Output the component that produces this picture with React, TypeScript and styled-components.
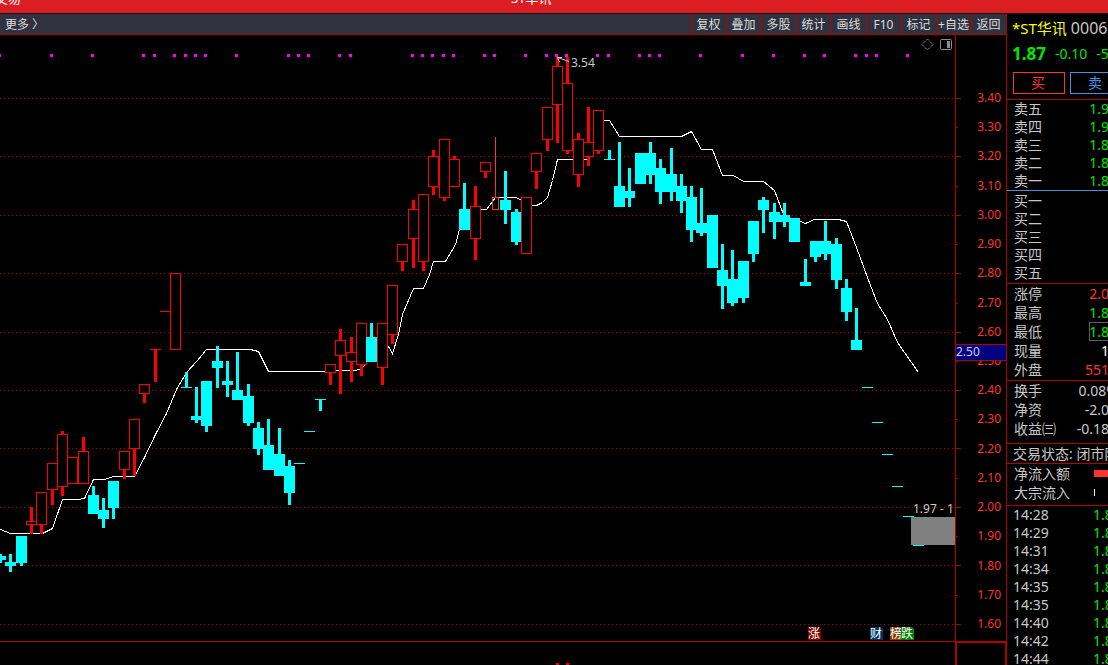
import React from "react";
import styled, { createGlobalStyle } from "styled-components";

const color = {
  line: "#b00000",
  candleUp: "#ff0000",
  candleDown: "#00ffff",
  up: "#ff3232",
  down: "#00e600",
  text: "#c8c8c8",
  blue: "#4090e6",
};

const GlobalStyle = createGlobalStyle`
  *, *::before, *::after { box-sizing: border-box; }
  body {
    margin: 0;
    background: #000;
    color: ${color.text};
    font-family: "Noto Sans", "Noto Sans CJK SC", sans-serif;
    font-size: 12px;
    overflow: hidden;
  }
`;

const Page = styled.div`
  display: flex;
  flex-direction: column;
  height: 100vh;
  overflow: hidden;
`;

const Header = styled.header`
  display: flex;
  flex: none;
  gap: 490px;
  height: 14px;
  padding-bottom: 7px;
  align-items: flex-end;
  background: #dc1e23;
  border-bottom: 1px solid #14141c;
  overflow: hidden;
  color: #fff;
  white-space: nowrap;
`;

const HeaderText = styled.span`
  line-height: 16px;
  font-size: 13px;

  &:first-child {
    margin-left: -5px;
  }
`;

const Body = styled.div`
  display: flex;
  flex: 1;
  min-height: 0;
`;

const Main = styled.main`
  display: flex;
  flex: 1;
  flex-direction: column;
  min-width: 0;
`;

const Toolbar = styled.nav`
  display: flex;
  flex: none;
  height: 21px;
  background: #30323f;
  border-bottom: 1px solid ${color.line};
`;

const MoreButton = styled.button`
  margin-right: auto;
  padding: 2px 5px 0;
  border: 0;
  background: none;
  color: #dcdcdc;
  font: inherit;
  line-height: 18px;
`;

const ToolButton = styled.button`
  width: 35px;
  padding: 2px 1px 0 0;
  border: 0;
  border-left: 1px solid ${color.line};
  background: none;
  color: #dcdcdc;
  font: inherit;
  line-height: 18px;
  white-space: nowrap;
  overflow: hidden;
`;

const ChartRow = styled.section`
  display: flex;
  flex: none;
`;

const Plot = styled.svg`
  display: block;
  flex: 1;
  min-width: 0;
  height: auto;
  font-size: 12px;
`;

const Axis = styled.div`
  position: relative;
  display: flex;
  flex: none;
  width: 51px;
  border-left: 1px solid ${color.line};
`;

const Ticks = styled.svg`
  width: 5px;
  height: 100%;
  flex: none;
`;

const AxisLabels = styled.div`
  display: flex;
  flex: 1;
  flex-direction: column;
  justify-content: space-between;
  padding: 55px 5px 9px 0;
  color: ${color.up};
  line-height: 16px;
  text-align: right;
`;

const AxisCursor = styled.output`
  position: absolute;
  top: 51%;
  left: 0;
  width: 100%;
  height: 17px;
  border: solid ${color.line};
  border-width: 1px 0;
  background: #000080;
  color: #d0d0e6;
  line-height: 14px;
`;

const LowerPane = styled.section`
  display: flex;
  flex: 1;
  min-height: 24px;
`;

const LowerPlot = styled.div`
  display: flex;
  flex: 1;
  border-top: 1px solid ${color.line};
`;

const LowerAxis = styled.div`
  width: 51px;
  border: solid ${color.line};
  border-width: 2px 1px 0 2px;
`;

const Sidebar = styled.aside`
  flex: none;
  width: 102px;
  border-left: 1px solid ${color.line};
  font-size: 14px;
  white-space: nowrap;
  overflow: hidden;
`;

const Title = styled.h1`
  display: flex;
  gap: 4px;
  height: 30px;
  margin: 0;
  padding-left: 5px;
  color: #ffff00;
  font-size: 15px;
  font-weight: 400;
  line-height: 28px;
`;

const Code = styled.span`
  color: ${color.text};
  font-size: 16px;
`;

const Quote = styled.div`
  display: flex;
  gap: 9px;
  padding-left: 5px;
  color: ${color.down};
  line-height: 20px;
`;

const LastPrice = styled.strong`
  font-size: 17px;
`;

const Trade = styled.div`
  display: flex;
  gap: 5px;
  padding: 8px 0 5px 6px;
`;

const TradeButton = styled.button<{ $tone: string }>`
  flex: none;
  width: 52px;
  height: 22px;
  padding: 0 2px 0 0;
  border: 1px solid ${(p) => p.$tone};
  background: none;
  color: ${(p) => p.$tone};
  font: inherit;
  line-height: 20px;
`;

const Group = styled.dl<{ $row: number; $top?: number; $bottom?: number; $tone?: string }>`
  margin: 0;
  padding: ${(p) => p.$top ?? 0}px 0 ${(p) => p.$bottom ?? 0}px 7px;
  border-top: 1px solid ${(p) => p.$tone ?? color.line};
  line-height: ${(p) => p.$row}px;
`;

const Row = styled.div`
  display: flex;
  align-items: center;
`;

const Label = styled.dt`
  flex: none;
  margin-right: auto;
`;

const Value = styled.dd<{ $tone?: string; $bleed?: number; $boxed?: boolean }>`
  flex: none;
  margin: 0 -${(p) => p.$bleed ?? 1}px 0 0;
  color: ${(p) => p.$tone ?? color.text};
  ${(p) => p.$boxed && "outline: 1px solid #5a6070;"}
  outline-offset: -1px;
`;

const Status = styled.p`
  margin: 0;
  padding-left: 6px;
  border-top: 1px solid ${color.line};
  line-height: 19px;
`;

const FlowBar = styled.dd<{ $tone: string; $fill?: boolean }>`
  flex: none;
  width: 14px;
  height: 7px;
  margin: 0;
  border-left: ${(p) => (p.$fill ? 14 : 1)}px solid ${(p) => p.$tone};
`;

const Deals = styled.table`
  width: 100%;
  border-collapse: separate;
  border-spacing: 0;
  border-top: 1px solid ${color.line};
  line-height: 18px;
`;

const DealTime = styled.td`
  width: 86px;
  padding: 0 0 0 6px;
`;

const DealPrice = styled.td`
  max-width: 15px;
  padding: 0;
  color: ${color.down};
`;

type Kind = "up" | "down";
/* kind, left edge, high, body top, body bottom, low */
type Candle = [Kind, number, number, number, number, number];

const candles: Candle[] = [
  ["down", -5, 554, 556, 560, 563], ["down", 5, 554, 562, 566, 572], ["down", 16, 536, 536, 563, 566],
  ["up", 26, 507, 521, 525, 534], ["up", 36, 492, 492, 525, 534], ["up", 47, 463, 463, 490, 505],
  ["up", 57, 431, 434, 487, 496], ["up", 67, 457, 457, 484, 484], ["up", 78, 437, 451, 484, 484],
  ["down", 88, 486, 495, 514, 514], ["down", 98, 498, 510, 519, 528], ["down", 108, 481, 481, 508, 519],
  ["up", 119, 451, 451, 470, 479], ["up", 129, 419, 419, 449, 476], ["up", 139, 384, 384, 394, 403],
  ["up", 150, 349, 349, 350, 382], ["up", 160, 311, 311, 312, 312], ["up", 170, 273, 273, 350, 350],
  ["down", 181, 372, 387, 388, 388], ["down", 191, 387, 416, 420, 423], ["down", 201, 381, 381, 426, 432],
  ["down", 212, 346, 361, 368, 388], ["down", 222, 361, 381, 385, 397], ["down", 232, 352, 390, 400, 400],
  ["down", 243, 384, 396, 423, 426], ["down", 253, 422, 428, 449, 455], ["down", 263, 419, 445, 470, 470],
  ["down", 274, 428, 454, 476, 476], ["down", 284, 460, 466, 493, 505], ["down", 294, 463, 463, 464, 464],
  ["down", 304, 431, 431, 432, 432], ["down", 315, 399, 399, 400, 411], ["up", 325, 364, 364, 373, 385],
  ["up", 335, 329, 340, 356, 394], ["up", 346, 337, 352, 362, 382], ["up", 356, 323, 323, 365, 376],
  ["down", 366, 323, 337, 362, 362], ["up", 377, 323, 323, 368, 385], ["up", 387, 285, 285, 335, 344],
  ["up", 397, 244, 244, 262, 271], ["up", 408, 200, 209, 239, 268], ["up", 418, 194, 194, 262, 271],
  ["up", 428, 150, 156, 187, 195], ["up", 439, 139, 139, 198, 201], ["up", 449, 156, 159, 187, 187],
  ["down", 459, 183, 209, 230, 230], ["up", 470, 186, 206, 239, 260], ["up", 480, 162, 162, 172, 178],
  ["down", 500, 171, 200, 210, 224], ["down", 511, 209, 212, 242, 245], ["up", 521, 197, 197, 254, 254],
  ["up", 531, 153, 153, 172, 189], ["up", 542, 107, 107, 140, 151], ["up", 552, 57, 66, 105, 143],
  ["up", 562, 57, 83, 151, 154], ["up", 573, 133, 139, 175, 187], ["up", 583, 107, 142, 157, 166],
  ["up", 593, 110, 110, 151, 154], ["down", 604, 150, 159, 160, 160], ["down", 614, 142, 186, 207, 207],
  ["down", 624, 168, 191, 198, 207], ["down", 635, 153, 153, 184, 184], ["down", 645, 142, 153, 175, 184],
  ["down", 655, 159, 168, 192, 204], ["down", 666, 148, 174, 192, 201], ["down", 676, 174, 186, 201, 213],
  ["down", 686, 186, 197, 230, 242], ["down", 696, 188, 223, 233, 236], ["down", 707, 215, 215, 268, 268],
  ["down", 717, 244, 270, 286, 309], ["down", 727, 250, 279, 303, 306], ["down", 738, 261, 261, 298, 303],
  ["down", 748, 221, 221, 254, 262], ["down", 758, 197, 200, 210, 233], ["down", 769, 203, 212, 222, 239],
  ["down", 779, 203, 215, 222, 227], ["down", 789, 218, 218, 242, 242], ["down", 800, 259, 282, 286, 286],
  ["down", 810, 241, 241, 257, 262], ["down", 820, 221, 241, 254, 260], ["down", 831, 238, 244, 280, 289],
  ["down", 841, 279, 288, 312, 321], ["down", 851, 308, 340, 350, 350], ["down", 862, 387, 387, 388, 388],
  ["down", 872, 422, 422, 423, 423], ["down", 882, 454, 454, 455, 455], ["down", 892, 486, 486, 487, 487],
  ["down", 903, 516, 516, 517, 517], ["down", 913, 545, 545, 546, 546],
];

const average =
  "0,529 10,533 42,533 52,528 62,499 77,499 84,498 93,479 104,479 113,476 134,476 144,457 155,434 166,413 " +
  "176,389 186,372 197,360 206,349 250,349 258,351 268,371 335,371 336,370 354,370 360,369 364,365 372,350 " +
  "382,340 388,346 392,353 398,334 402,314 413,288 423,288 429,274 433,261 445,261 455,244 459,229 470,209 " +
  "486,209 495,197 516,197 521,200 532,205 536,205 542,202 547,197 552,180 557,159 588,159 598,120 609,120 " +
  "619,136 681,136 691,131 701,149 712,149 722,175 733,175 743,181 763,181 774,190 783,214 790,221 800,221 " +
  "805,223 814,219 838,219 846,221 856,247 867,277 877,303 887,319 897,342 918,372";

const gridLines = [98, 156, 215, 273, 332, 390, 448, 507, 565, 624];
const minorTicks = [127, 186, 244, 303, 361, 419, 478, 536, 595];

const signals = [
  -2, 50, 91, 142, 153, 173, 184, 194, 204, 235, 287, 297, 307, 338, 349, 411, 421, 431, 442, 452, 483, 493,
  524, 545, 555, 565, 596, 607, 638, 648, 658, 699, 741, 772, 803, 823, 854, 865, 875, 906,
];

const badges = [
  { text: "涨", x: 808, fill: "#800000" },
  { text: "财", x: 870, fill: "#003264" },
  { text: "榜", x: 890, fill: "#804000" },
  { text: "跌", x: 901, fill: "#008000" },
];

const prices = Array.from({ length: 19 }, (_, i) => (3.4 - i * 0.1).toFixed(2));
const tools = ["复权", "叠加", "多股", "统计", "画线", "F10", "标记", "+自选", "返回"];
const asks = [["卖五", "1.9"], ["卖四", "1.9"], ["卖三", "1.8"], ["卖二", "1.8"], ["卖一", "1.8"]];
const bids = ["买一", "买二", "买三", "买四", "买五"];
const deals = ["14:28", "14:29", "14:31", "14:34", "14:35", "14:35", "14:40", "14:42", "14:44"];

function CandleMark({ candle: [kind, x, high, top, bottom, low] }: { candle: Candle }) {
  const tone = kind === "up" ? color.candleUp : color.candleDown;
  const hollow = kind === "up" && bottom - top > 1;
  return (
    <g fill={tone}>
      <rect x={x + 4} y={high} width={3} height={low - high} />
      <rect x={x} y={top} width={11} height={bottom - top} />
      {hollow && <rect x={x + 1} y={top + 1} width={9} height={bottom - top - 2} fill="#000" />}
    </g>
  );
}

function Chart() {
  return (
    <Plot viewBox="0 35 955 606" role="img" aria-label="K线图">
      <g shapeRendering="crispEdges">
        {gridLines.map((y) => (
          <path key={y} d={`M0 ${y + 0.5}H955`} stroke="#b00000" strokeDasharray="1 3" />
        ))}
        <polyline points={average} transform="translate(.5 .5)" fill="none" stroke="#fff" />
        {candles.map((c) => (
          <CandleMark key={c[1]} candle={c} />
        ))}
        <path d="M495.500 137V197M492.500 197.500H498.500V209.500H492.500Z" fill="none" stroke={color.up} />
        {signals.map((x) => (
          <rect key={x} x={x} y={54} width={3} height={3} fill="#ff00ff" />
        ))}
        <rect x={911} y={517} width={44} height={28} fill="#808080" />
      </g>
      <path d="M569 61.500 557.500 57.500M562 57.500H557.500L559.500 62" fill="none" stroke={color.text} />
      <text x={571} y={67} fill={color.text}>3.54</text>
      <text x={913} y={513} fill={color.text}>1.97 - 1</text>
      <path d="M927.500 39 933 44.500 927.500 50 922 44.500Z" fill="none" stroke="#8c8c8c" strokeDasharray="1.500 .6" />
      <rect x={940.5} y={39.5} width={11} height={10} rx={1} fill="none" stroke="#8c8c8c" />
      <rect x={947} y={41} width={3} height={7} fill="#8c8c8c" />
      {badges.map((b) => (
        <g key={b.text}>
          <path d={`M${b.x} 627h11l2 2v11h-13z`} fill={b.fill} />
          <text x={b.x} y={638} fill="#fff">{b.text}</text>
        </g>
      ))}
    </Plot>
  );
}

export default function App() {
  return (
    <Page>
      <GlobalStyle />
      <Header>
        <HeaderText>交易</HeaderText>
        <HeaderText>ST华讯</HeaderText>
      </Header>
      <Body>
        <Main>
          <Toolbar>
            <MoreButton>更多 〉</MoreButton>
            {tools.map((t) => (
              <ToolButton key={t}>{t}</ToolButton>
            ))}
          </Toolbar>
          <ChartRow>
            <Chart />
            <Axis>
              <Ticks viewBox="0 35 5 606" preserveAspectRatio="none" shapeRendering="crispEdges" aria-hidden>
                {gridLines.map((y) => (
                  <rect key={y} y={y} width={5} height={1} fill={color.line} />
                ))}
                {minorTicks.map((y) => (
                  <rect key={y} y={y} width={2} height={1} fill={color.line} />
                ))}
              </Ticks>
              <AxisLabels>
                {prices.map((p) => (
                  <span key={p}>{p}</span>
                ))}
              </AxisLabels>
              <AxisCursor>2.50</AxisCursor>
            </Axis>
          </ChartRow>
          <LowerPane>
            <LowerPlot>
              <svg width="100%" height="23" shapeRendering="crispEdges" aria-hidden>
                <rect x={556} y={21} width={3} height={2} fill={color.candleUp} />
                <rect x={566} y={21} width={3} height={2} fill={color.candleUp} />
              </svg>
            </LowerPlot>
            <LowerAxis />
          </LowerPane>
        </Main>
        <Sidebar>
          <Title>
            *ST华讯 <Code>0006</Code>
          </Title>
          <Quote>
            <LastPrice>1.87</LastPrice>
            <span>-0.10</span>
            <span>-5</span>
          </Quote>
          <Trade>
            <TradeButton $tone={color.up}>买</TradeButton>
            <TradeButton $tone={color.blue}>卖</TradeButton>
          </Trade>
          <Group $row={18}>
            {asks.map(([label, value]) => (
              <Row key={label}>
                <Label>{label}</Label>
                <Value $tone={color.down}>{value}</Value>
              </Row>
            ))}
          </Group>
          <Group $row={18} $top={1} $bottom={1} $tone={color.blue}>
            {bids.map((label) => (
              <Row key={label}>
                <Label>{label}</Label>
              </Row>
            ))}
          </Group>
          <Group $row={19} $bottom={1}>
            <Row><Label>涨停</Label><Value $tone={color.up}>2.0</Value></Row>
            <Row><Label>最高</Label><Value $tone={color.down}>1.8</Value></Row>
            <Row><Label>最低</Label><Value $tone={color.down} $boxed>1.8</Value></Row>
            <Row><Label>现量</Label><Value $tone="#fff">1</Value></Row>
            <Row><Label>外盘</Label><Value $tone={color.up}>551</Value></Row>
          </Group>
          <Group $row={19} $bottom={5}>
            <Row><Label>换手</Label><Value $bleed={10}>0.08%</Value></Row>
            <Row><Label>净资</Label><Value>-2.0</Value></Row>
            <Row><Label>收益㈢</Label><Value>-0.18</Value></Row>
          </Group>
          <Status>交易状态: 闭市阶</Status>
          <Group $row={19} $bottom={3}>
            <Row><Label>净流入额</Label><FlowBar $tone={color.up} $fill /></Row>
            <Row><Label>大宗流入</Label><FlowBar $tone="#fff" /></Row>
          </Group>
          <Deals>
            <tbody>
              {deals.map((time, i) => (
                <tr key={i}>
                  <DealTime>{time}</DealTime>
                  <DealPrice>1.8</DealPrice>
                </tr>
              ))}
            </tbody>
          </Deals>
        </Sidebar>
      </Body>
    </Page>
  );
}
